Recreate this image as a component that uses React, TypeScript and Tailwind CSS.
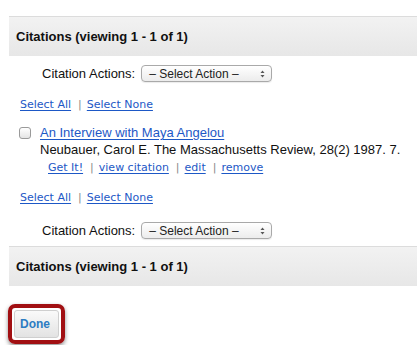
import React from 'react';

const linkCls = 'text-[#1d58c6] underline underline-offset-2';

const SelectBox = () => (
  <div className="relative flex h-[17px] w-[131px] items-center rounded-[4px] border border-[#a9a9a9] bg-gradient-to-b from-white to-[#ececec] pl-[7px] text-[12px] text-[#222] shadow-[0_1px_1px_rgba(0,0,0,0.08)]">
    <span>– Select Action –</span>
    <svg className="absolute right-[6px] top-[4px]" width="5" height="8" viewBox="0 0 5 8">
      <path d="M0.5 3 L2.5 0.5 L4.5 3 Z" fill="#555" />
      <path d="M0.5 5 L2.5 7.5 L4.5 5 Z" fill="#555" />
    </svg>
  </div>
);

const ActionsRow = () => (
  <div className="flex h-[17px] items-center gap-[6px] pl-[33px] text-[13px] text-[#111]">
    <span>Citation Actions:</span>
    <SelectBox />
  </div>
);

const Header = () => (
  <div className="flex h-[40px] items-center border-t border-[#dcdcdc] bg-gradient-to-b from-[#f2f2f2] to-[#e7e7e7] pl-[7px] text-[13px] font-bold text-[#111]">
    Citations (viewing 1 - 1 of 1)
  </div>
);

const Sep = ({ className }: { className: string }) => (
  <span className={`text-[#888] ${className}`}>|</span>
);

const SelectLinks = () => (
  <div className="flex h-[16px] items-center pl-[11px] text-[11px]" style={{ fontFamily: '"DejaVu Sans", sans-serif' }}>
    <a className={linkCls}>Select All</a>
    <Sep className="ml-[7px] mr-[5px]" />
    <a className={linkCls}>Select None</a>
  </div>
);

export default function App() {
  return (
    <div className="min-h-screen bg-white pl-[9px] pt-[16px]" style={{ fontFamily: '"Liberation Sans", Arial, sans-serif' }}>
      <Header />
      <div className="mt-[9px]">
        <ActionsRow />
      </div>
      <div className="mt-[15px]">
        <SelectLinks />
      </div>
      <div className="mt-[11px] flex pl-[10px]">
        <div className="mt-[3px] h-[12px] w-[12px] rounded-[3px] border border-[#9a9a9a] bg-gradient-to-b from-white to-[#e4e4e4]" />
        <div className="ml-[9px]">
          <div className="text-[13px] leading-[17px]">
            <a className={linkCls}>An Interview with Maya Angelou</a>
          </div>
          <div className="text-[13px] leading-[17px] text-[#111]">
            Neubauer, Carol E. The Massachusetts Review, 28(2) 1987. 7.
          </div>
          <div className="mt-[2px] flex h-[16px] items-center pl-[8px] text-[11px]" style={{ fontFamily: '"DejaVu Sans", sans-serif' }}>
            <a className={linkCls}>Get It!</a>
            <Sep className="ml-[7px] mr-[5px]" />
            <a className={linkCls}>view citation</a>
            <Sep className="ml-[7px] mr-[5px]" />
            <a className={linkCls}>edit</a>
            <Sep className="ml-[7px] mr-[5px]" />
            <a className={linkCls}>remove</a>
          </div>
        </div>
      </div>
      <div className="mt-[14px]">
        <SelectLinks />
      </div>
      <div className="mt-[16px]">
        <ActionsRow />
      </div>
      <div className="mt-[7px]">
        <Header />
      </div>
      <div className="ml-[-1px] mt-[18px] inline-block rounded-[7px] border-[4px] border-[#a10f12] p-[2px] shadow-[0_2px_4px_rgba(0,0,0,0.45)]">
        <div className="flex h-[28px] w-[45px] items-center rounded-[3px] border border-[#cfcfcf] bg-gradient-to-b from-[#fafafa] to-[#e3e3e3] pl-[5px] text-[12px] font-bold text-[#2c7cc2]">
          Done
        </div>
      </div>
    </div>
  );
}
